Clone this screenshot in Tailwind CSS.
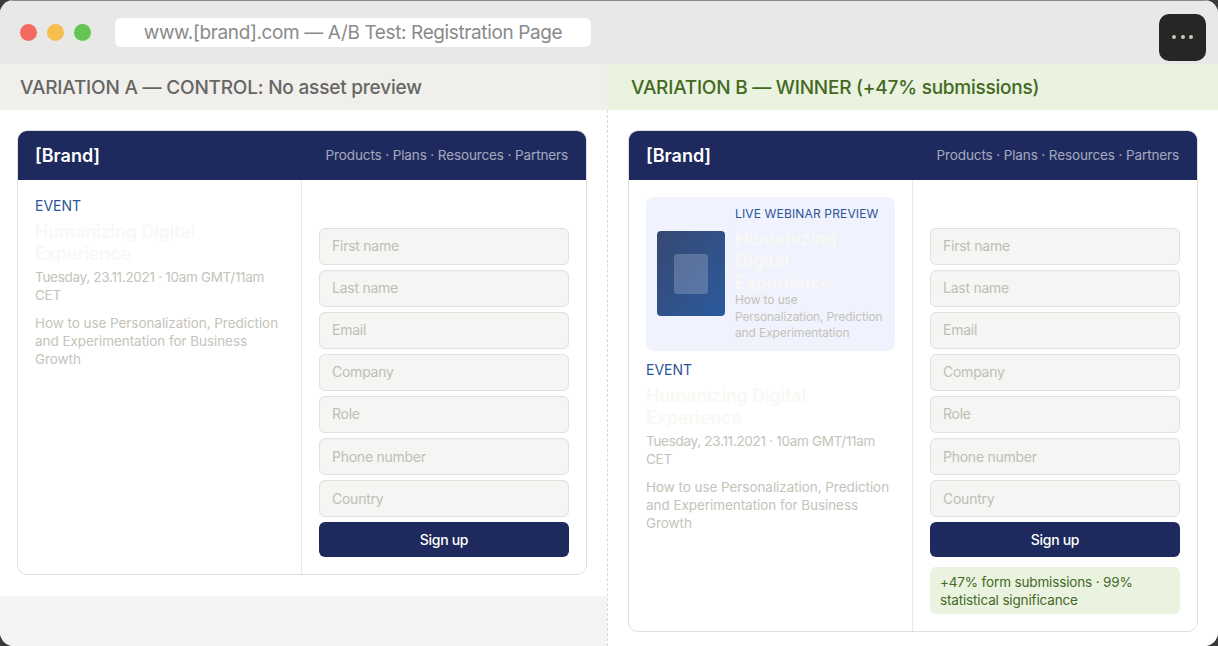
<!DOCTYPE html>
<html lang="en">
<head>
    <meta charset="UTF-8">
    <meta name="viewport" content="width=device-width, initial-scale=1.0">
    <title>A/B Test: Registration Page</title>
    <script src="https://cdn.jsdelivr.net/npm/@tailwindcss/browser@4"></script>
</head>
<body class="bg-[#3a3a38] font-['Inter',sans-serif] overflow-hidden">
    <div class="w-[1218px] h-[646px] rounded-[14px] overflow-hidden bg-white flex flex-col">
        <!-- title bar -->
        <div class="h-[64px] shrink-0 bg-[#e8e8e6] border-t border-[#8a8a88] flex items-center pl-[20px] pr-[12px]">
            <div class="flex gap-[10px]">
                <span class="w-[17px] h-[17px] rounded-full bg-[#f26a60]"></span>
                <span class="w-[17px] h-[17px] rounded-full bg-[#f6bd4f]"></span>
                <span class="w-[17px] h-[17px] rounded-full bg-[#62c554]"></span>
            </div>
            <div class="ml-[24px] w-[476px] h-[29px] pt-[1px] bg-white rounded-[6px] flex items-center justify-center text-[19px] tracking-[-0.38px] text-[#8a8a8a]">www.[brand].com — A/B Test: Registration Page</div>
            <div class="ml-auto mt-[9px] w-[47px] h-[47px] bg-[#262624] rounded-[10px] flex items-center justify-center gap-[4.5px]">
                <span class="w-[4px] h-[4px] rounded-full bg-[#c9c9c0]"></span>
                <span class="w-[4px] h-[4px] rounded-full bg-[#c9c9c0]"></span>
                <span class="w-[4px] h-[4px] rounded-full bg-[#c9c9c0]"></span>
            </div>
        </div>

        <div class="flex flex-1 min-h-0">
            <!-- variation A -->
            <div class="w-[607px] shrink-0 flex flex-col bg-[#f4f4f2]">
                <div class="h-[46px] shrink-0 bg-[#f0efec] flex items-center pl-[20px] pt-[2px] text-[19px] tracking-[-0.2px] font-medium text-[#666664]">VARIATION A — CONTROL: No asset preview</div>
                <div class="bg-white pl-[17px] pt-[20px] pb-[21px]">
                    <div class="w-[570px] border border-[#dfdfdc] rounded-[10px] overflow-hidden">
                        <div class="h-[49px] bg-[#1e2a5e] flex items-center justify-between pl-[17px] pr-[18px]">
                            <span class="text-[18px] font-semibold text-white">[Brand]</span>
                            <span class="text-[13.5px] tracking-[-0.12px] text-white/60">Products · Plans · Resources · Partners</span>
                        </div>
                        <div class="flex">
                            <div class="w-[284px] border-r border-[#e8e8e5] p-[17px]">
                                <p class="text-[14px] leading-[18px] text-[#2c5599]">EVENT</p>
                                <h3 class="mt-[6px] text-[18px] leading-[22px] tracking-[-0.2px] font-semibold text-[#f8f8f4]">Humanizing Digital Experience</h3>
                                <p class="mt-[3px] text-[13.5px] leading-[18px] tracking-[-0.3px] text-[#c4c3ba]">Tuesday, 23.11.2021 · 10am GMT/11am CET</p>
                                <p class="mt-[10px] text-[13.5px] leading-[18px] tracking-[-0.06px] text-[#c4c3ba]">How to use Personalization, Prediction and Experimentation for Business Growth</p>
                            </div>
                            <div class="flex-1 pt-[48px] px-[17px] pb-[17px]">
                                <form class="flex flex-col gap-[5px]">
                                    <input placeholder="First name" class="h-[37px] w-full rounded-[6px] border border-[#e0e0dc] bg-[#f5f5f3] px-[12px] pb-[2px] text-[14px] tracking-[-0.25px] placeholder:text-[#bfbeb5]">
                                    <input placeholder="Last name" class="h-[37px] w-full rounded-[6px] border border-[#e0e0dc] bg-[#f5f5f3] px-[12px] pb-[2px] text-[14px] tracking-[-0.25px] placeholder:text-[#bfbeb5]">
                                    <input placeholder="Email" class="h-[37px] w-full rounded-[6px] border border-[#e0e0dc] bg-[#f5f5f3] px-[12px] pb-[2px] text-[14px] tracking-[-0.25px] placeholder:text-[#bfbeb5]">
                                    <input placeholder="Company" class="h-[37px] w-full rounded-[6px] border border-[#e0e0dc] bg-[#f5f5f3] px-[12px] pb-[2px] text-[14px] tracking-[-0.25px] placeholder:text-[#bfbeb5]">
                                    <input placeholder="Role" class="h-[37px] w-full rounded-[6px] border border-[#e0e0dc] bg-[#f5f5f3] px-[12px] pb-[2px] text-[14px] tracking-[-0.25px] placeholder:text-[#bfbeb5]">
                                    <input placeholder="Phone number" class="h-[37px] w-full rounded-[6px] border border-[#e0e0dc] bg-[#f5f5f3] px-[12px] text-[14px] tracking-[-0.25px] placeholder:text-[#bfbeb5]">
                                    <input placeholder="Country" class="h-[37px] w-full rounded-[6px] border border-[#e0e0dc] bg-[#f5f5f3] px-[12px] text-[14px] tracking-[-0.25px] placeholder:text-[#bfbeb5]">
                                    <button type="button" class="h-[35px] w-full rounded-[6px] bg-[#1e2a5e] text-[14px] tracking-[-0.3px] font-medium text-white">Sign up</button>
                                </form>
                            </div>
                        </div>
                    </div>
                </div>
            </div>

            <!-- variation B -->
            <div class="flex-1 flex flex-col bg-white">
                <div class="h-[46px] shrink-0 bg-[#eaf2e0] flex items-center pl-[24px] pt-[2px] text-[19px] tracking-[-0.23px] font-medium text-[#44691f]">VARIATION B — WINNER (+47% submissions)</div>
                <div class="flex-1 border-l border-dashed border-[#d8d8d4] pl-[20px] pt-[20px]">
                    <div class="w-[570px] border border-[#dfdfdc] rounded-[10px] overflow-hidden">
                        <div class="h-[49px] bg-[#1e2a5e] flex items-center justify-between pl-[17px] pr-[18px]">
                            <span class="text-[18px] font-semibold text-white">[Brand]</span>
                            <span class="text-[13.5px] tracking-[-0.12px] text-white/60">Products · Plans · Resources · Partners</span>
                        </div>
                        <div class="flex">
                            <div class="w-[284px] border-r border-[#e8e8e5] p-[17px]">
                                <div class="h-[154px] rounded-[8px] bg-[#f0f2fd] pl-[11px] pr-[10px] flex items-center gap-[10px]">
                                    <div class="w-[68px] h-[85px] -mt-[1px] shrink-0 rounded-[4px] bg-gradient-to-br from-[#364872] to-[#2a5a9e] flex items-center justify-center">
                                        <div class="w-[34px] h-[40px] rounded-[3px] bg-white/20"></div>
                                    </div>
                                    <div>
                                        <p class="text-[12px] leading-[16px] tracking-[0.15px] text-[#2c5599]">LIVE WEBINAR PREVIEW</p>
                                        <h3 class="mt-[6px] text-[18px] leading-[22px] tracking-[-0.2px] font-semibold text-[#f8f8f4]">Humanizing Digital Experience</h3>
                                        <p class="-mt-[2px] text-[12px] leading-[16.5px] tracking-[-0.12px] text-[#c4c3ba]">How to use Personalization, Prediction and Experimentation</p>
                                    </div>
                                </div>
                                <p class="mt-[10px] text-[14px] leading-[18px] text-[#2c5599]">EVENT</p>
                                <h3 class="mt-[6px] text-[18px] leading-[22px] tracking-[-0.2px] font-semibold text-[#f8f8f4]">Humanizing Digital Experience</h3>
                                <p class="mt-[3px] text-[13.5px] leading-[18px] tracking-[-0.3px] text-[#c4c3ba]">Tuesday, 23.11.2021 · 10am GMT/11am CET</p>
                                <p class="mt-[10px] text-[13.5px] leading-[18px] tracking-[-0.06px] text-[#c4c3ba]">How to use Personalization, Prediction and Experimentation for Business Growth</p>
                            </div>
                            <div class="flex-1 pt-[48px] px-[17px] pb-[17px]">
                                <form class="flex flex-col gap-[5px]">
                                    <input placeholder="First name" class="h-[37px] w-full rounded-[6px] border border-[#e0e0dc] bg-[#f5f5f3] px-[12px] pb-[2px] text-[14px] tracking-[-0.25px] placeholder:text-[#bfbeb5]">
                                    <input placeholder="Last name" class="h-[37px] w-full rounded-[6px] border border-[#e0e0dc] bg-[#f5f5f3] px-[12px] pb-[2px] text-[14px] tracking-[-0.25px] placeholder:text-[#bfbeb5]">
                                    <input placeholder="Email" class="h-[37px] w-full rounded-[6px] border border-[#e0e0dc] bg-[#f5f5f3] px-[12px] pb-[2px] text-[14px] tracking-[-0.25px] placeholder:text-[#bfbeb5]">
                                    <input placeholder="Company" class="h-[37px] w-full rounded-[6px] border border-[#e0e0dc] bg-[#f5f5f3] px-[12px] pb-[2px] text-[14px] tracking-[-0.25px] placeholder:text-[#bfbeb5]">
                                    <input placeholder="Role" class="h-[37px] w-full rounded-[6px] border border-[#e0e0dc] bg-[#f5f5f3] px-[12px] pb-[2px] text-[14px] tracking-[-0.25px] placeholder:text-[#bfbeb5]">
                                    <input placeholder="Phone number" class="h-[37px] w-full rounded-[6px] border border-[#e0e0dc] bg-[#f5f5f3] px-[12px] text-[14px] tracking-[-0.25px] placeholder:text-[#bfbeb5]">
                                    <input placeholder="Country" class="h-[37px] w-full rounded-[6px] border border-[#e0e0dc] bg-[#f5f5f3] px-[12px] text-[14px] tracking-[-0.25px] placeholder:text-[#bfbeb5]">
                                    <button type="button" class="h-[35px] w-full rounded-[6px] bg-[#1e2a5e] text-[14px] tracking-[-0.3px] font-medium text-white">Sign up</button>
                                </form>
                                <div class="mt-[10px] h-[47px] rounded-[6px] bg-[#eaf2e0] px-[10px] py-[6px] text-[13.5px] leading-[18px] tracking-[-0.15px] text-[#44691f]">+47% form submissions · 99% statistical significance</div>
                            </div>
                        </div>
                    </div>
                </div>
            </div>
        </div>
    </div>
</body>
</html>
